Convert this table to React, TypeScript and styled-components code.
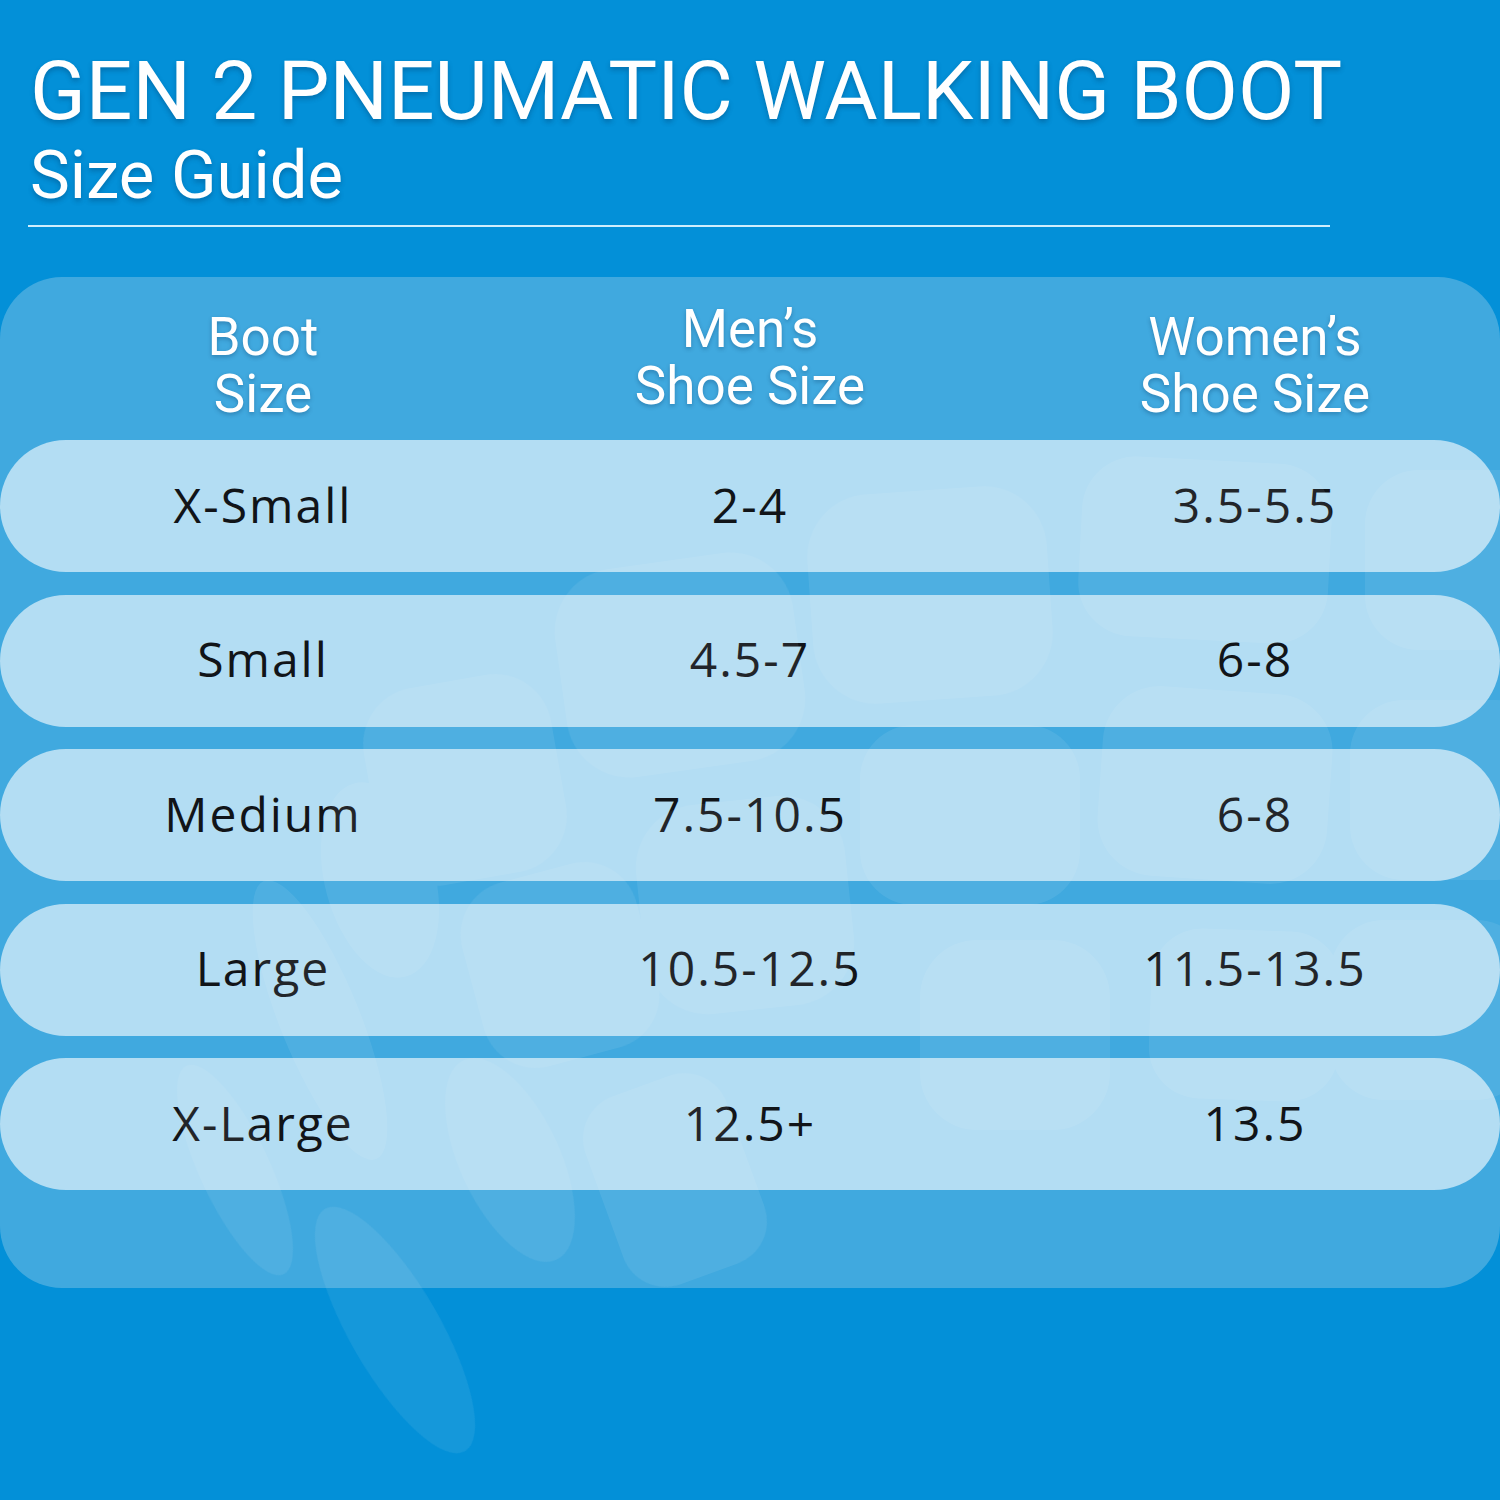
import React from "react";
import styled, { createGlobalStyle } from "styled-components";

const Global = createGlobalStyle`
  html, body { margin: 0; padding: 0; }
  body { background: #0390d8; }
`;

const Page = styled.div`
  position: relative;
  width: 1500px;
  height: 1500px;
  overflow: hidden;
  background: #0390d8;
  font-family: Roboto, "Open Sans", sans-serif;
  display: flex;
  flex-direction: column;
`;

const Header = styled.header`
  padding: 46px 0 0 30px;
  display: flex;
  flex-direction: column;
`;

const Title = styled.h1`
  margin: 0;
  font-family: Roboto, sans-serif;
  font-weight: 400;
  font-size: 82px;
  line-height: 90px;
  color: #ffffff;
  letter-spacing: 0px;
  text-shadow: 0 3px 5px rgba(0, 40, 80, 0.3);
`;

const Subtitle = styled.h2`
  margin: 0;
  font-family: Roboto, sans-serif;
  font-weight: 400;
  font-size: 67px;
  line-height: 78px;
  color: #ffffff;
  text-shadow: 0 3px 5px rgba(0, 40, 80, 0.3);
`;

const Divider = styled.hr`
  margin: 11px 0 0 -2px;
  width: 1302px;
  border: none;
  height: 2px;
  background: #cfeefd;
`;

const Panel = styled.section`
  margin-top: 50px;
  height: 1011px;
  box-sizing: border-box;
  background: #40a9df;
  border-radius: 62px;
  display: flex;
  flex-direction: column;
  gap: 22.5px;
`;

const Grid = styled.div`
  display: grid;
  grid-template-columns: 526px 448px 1fr;
  align-items: center;
  & > *:nth-child(3) {
    padding-left: 36px;
  }
`;

const HeadRow = styled(Grid)`
  height: 163px;
  margin-bottom: -22.5px;
`;

const HeadCell = styled.div<{ $raise?: number }>`
  text-align: center;
  font-family: Roboto, sans-serif;
  font-weight: 400;
  font-size: 53px;
  line-height: 57px;
  color: #ffffff;
  text-shadow: 0 2px 4px rgba(0, 40, 80, 0.3);
  transform: translateY(${(p) => (p.$raise ? -p.$raise : 0)}px);
  padding-top: 14px;
`;

const Row = styled(Grid)`
  height: 132px;
  border-radius: 66px;
  background: #b3ddf3;
`;

const Cell = styled.div`
  text-align: center;
  font-family: "Open Sans", sans-serif;
  font-weight: 400;
  font-size: 48px;
  letter-spacing: 2px;
  color: #111418;
  padding-bottom: 4px;
`;

const Watermark = styled.svg`
  position: absolute;
  inset: 0;
  pointer-events: none;
`;

const rows = [
  ["X-Small", "2-4", "3.5-5.5"],
  ["Small", "4.5-7", "6-8"],
  ["Medium", "7.5-10.5", "6-8"],
  ["Large", "10.5-12.5", "11.5-13.5"],
  ["X-Large", "12.5+", "13.5"],
];

const blobs: [number, number, number, number, number][] = [
  [810, 490, 240, 210, -4],
  [1080, 460, 250, 180, 3],
  [1365, 470, 200, 180, 0],
  [560, 560, 240, 210, -8],
  [860, 725, 220, 180, 0],
  [1100, 690, 230, 190, 4],
  [1350, 700, 200, 180, 0],
  [370, 680, 190, 200, -10],
  [640, 800, 210, 210, -6],
  [920, 940, 190, 190, 0],
  [1150, 930, 190, 170, 2],
  [1330, 920, 200, 180, 0],
  [470, 870, 180, 190, -15],
  [600, 1080, 150, 200, -20],
];

const ovals: [number, number, number, number, number][] = [
  [320, 1020, 80, 300, -22],
  [235, 1170, 70, 230, -25],
  [395, 1330, 90, 280, -30],
  [510, 1160, 100, 220, -25],
  [380, 880, 110, 200, -15],
];

export default function App() {
  return (
    <Page>
      <Global />
      <Header>
        <Title>GEN 2 PNEUMATIC WALKING BOOT</Title>
        <Subtitle>Size Guide</Subtitle>
        <Divider />
      </Header>
      <Panel>
        <HeadRow>
          <HeadCell>
            Boot
            <br />
            Size
          </HeadCell>
          <HeadCell $raise={8}>
            Men’s
            <br />
            Shoe Size
          </HeadCell>
          <HeadCell>
            Women’s
            <br />
            Shoe Size
          </HeadCell>
        </HeadRow>
        {rows.map((r) => (
          <Row key={r[0]}>
            {r.map((c, i) => (
              <Cell key={i}>{c}</Cell>
            ))}
          </Row>
        ))}
      </Panel>
      <Watermark width="1500" height="1500" viewBox="0 0 1500 1500">
        <g fill="#ffffff" opacity="0.075">
          {blobs.map(([x, y, w, h, r], i) => (
            <rect
              key={i}
              x={x}
              y={y}
              width={w}
              height={h}
              rx={Math.min(w, h) * 0.3}
              transform={`rotate(${r} ${x + w / 2} ${y + h / 2})`}
            />
          ))}
          {ovals.map(([cx, cy, rx, ry, r], i) => (
            <ellipse
              key={`o${i}`}
              cx={cx}
              cy={cy}
              rx={rx / 2}
              ry={ry / 2}
              transform={`rotate(${r} ${cx} ${cy})`}
            />
          ))}
        </g>
      </Watermark>
    </Page>
  );
}
